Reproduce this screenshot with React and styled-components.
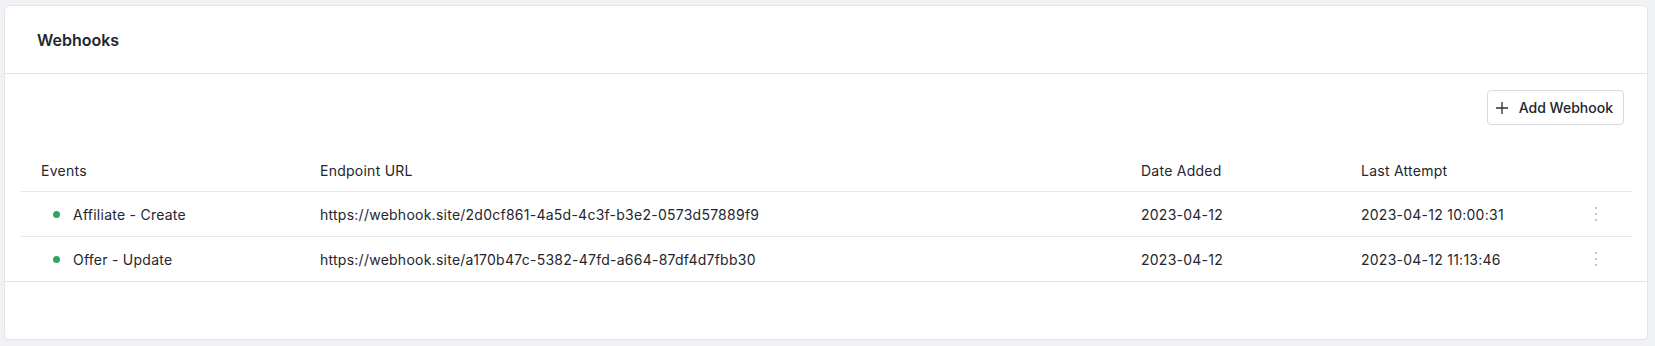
import React from 'react'
import styled, { createGlobalStyle } from 'styled-components'

const GlobalStyle = createGlobalStyle`
  html, body {
    margin: 0;
    padding: 0;
    background: #f1f2f6;
    font-family: Inter, "Noto Sans", sans-serif;
    color: #23262d;
  }
`

const Page = styled.div`
  padding: 5px 7px 7px 4px;
`

const Card = styled.div`
  background: #fff;
  border: 1px solid #e2e4ea;
  border-radius: 5px;
  display: flex;
  flex-direction: column;
`

const CardHeader = styled.div`
  height: 67px;
  display: flex;
  align-items: center;
  padding: 0 32px;
  border-bottom: 1px solid #e2e4ea;
`

const Title = styled.h2`
  margin: 0;
  font-size: 16px;
  font-weight: 600;
  color: #23262d;
`

const Body = styled.div`
  padding: 16px 15px 0 16px;
  border-bottom: 1px solid #e2e4ea;
`

const Toolbar = styled.div`
  display: flex;
  justify-content: flex-end;
  padding-right: 8px;
`

const Button = styled.button`
  display: flex;
  align-items: center;
  gap: 10px;
  height: 35px;
  padding: 0 10px 0 7px;
  background: #fff;
  border: 1px solid #d6d9e0;
  border-radius: 4px;
  font-family: inherit;
  font-size: 14px;
  font-weight: 500;
  color: #23262d;
  cursor: pointer;
`

const Table = styled.div`
  margin-top: 24px;
`

const Row = styled.div`
  display: grid;
  grid-template-columns: 279px 821px 220px 1fr 72px;
  align-items: center;
  height: ${p => (p.$head ? '42px' : '44px')};
  border-bottom: ${p => (p.$last ? 'none' : '1px solid #e5e7ef')};
  font-size: 14px;
  letter-spacing: 0.25px;
  color: #23262d;
`

const Cell = styled.div`
  padding-left: 20px;
  white-space: nowrap;
  display: flex;
  align-items: center;
`

const EventCell = styled(Cell)`
  padding-left: 32px;
  gap: 13px;
`

const Dot = styled.span`
  width: 7px;
  height: 7px;
  border-radius: 50%;
  background: #2fa55b;
`

const Actions = styled.div`
  display: flex;
  justify-content: center;
`

const Kebab = styled.div`
  display: flex;
  flex-direction: column;
  gap: 4px;
  span {
    width: 2px;
    height: 2px;
    border-radius: 50%;
    background: #a9b3c6;
  }
`

const Footer = styled.div`
  height: 57px;
`

const PlusIcon = () => (
  <svg width="14" height="14" viewBox="0 0 14 14" fill="none">
    <path d="M7 1v12M1 7h12" stroke="#2b2f36" strokeWidth="1.3" />
  </svg>
)

const hooks = [
  {
    event: 'Affiliate - Create',
    url: 'https://webhook.site/2d0cf861-4a5d-4c3f-b3e2-0573d57889f9',
    added: '2023-04-12',
    last: '2023-04-12 10:00:31',
  },
  {
    event: 'Offer - Update',
    url: 'https://webhook.site/a170b47c-5382-47fd-a664-87df4d7fbb30',
    added: '2023-04-12',
    last: '2023-04-12 11:13:46',
  },
]

export default function App() {
  return (
    <>
      <GlobalStyle />
      <Page>
        <Card>
          <CardHeader>
            <Title>Webhooks</Title>
          </CardHeader>
          <Body>
            <Toolbar>
              <Button>
                <PlusIcon />
                Add Webhook
              </Button>
            </Toolbar>
            <Table>
              <Row $head>
                <Cell>Events</Cell>
                <Cell>Endpoint URL</Cell>
                <Cell>Date Added</Cell>
                <Cell>Last Attempt</Cell>
                <Cell />
              </Row>
              {hooks.map((h, i) => (
                <Row key={h.url} $last={i === hooks.length - 1}>
                  <EventCell>
                    <Dot />
                    {h.event}
                  </EventCell>
                  <Cell>{h.url}</Cell>
                  <Cell>{h.added}</Cell>
                  <Cell>{h.last}</Cell>
                  <Actions>
                    <Kebab>
                      <span />
                      <span />
                      <span />
                    </Kebab>
                  </Actions>
                </Row>
              ))}
            </Table>
          </Body>
          <Footer />
        </Card>
      </Page>
    </>
  )
}
